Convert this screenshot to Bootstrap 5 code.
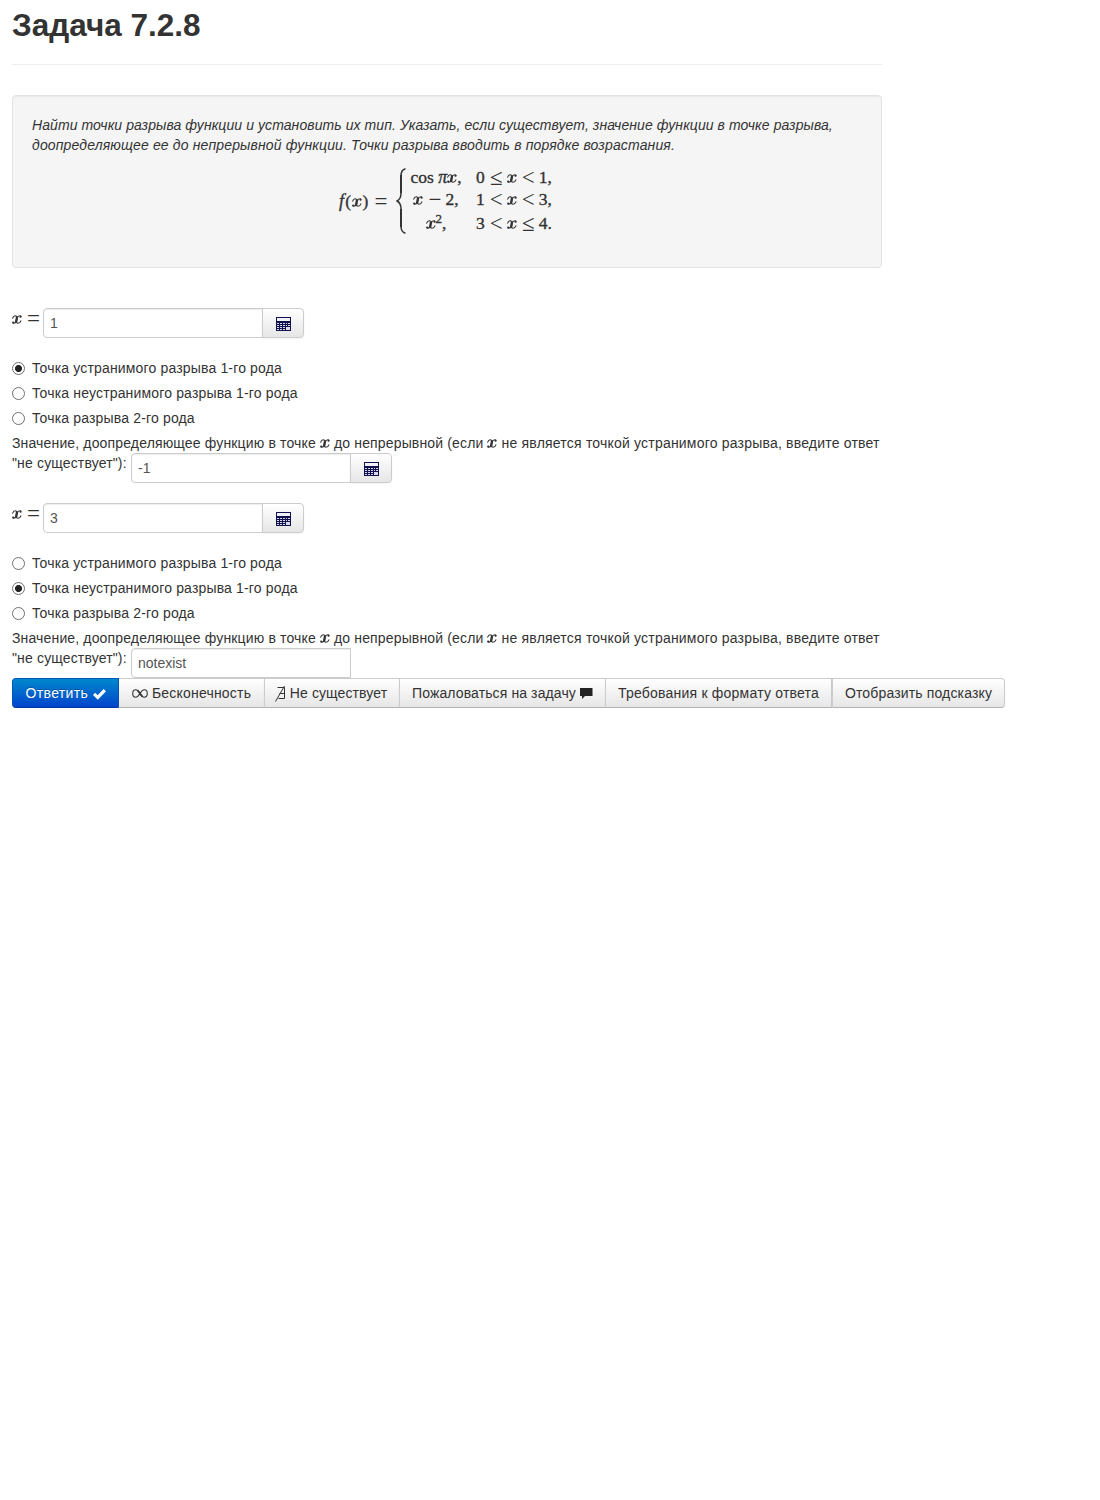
<!DOCTYPE html>
<html lang="ru">
<head>
<meta charset="utf-8">
<meta name="viewport" content="width=device-width, initial-scale=1">
<title>Задача 7.2.8</title>
<link href="https://cdn.jsdelivr.net/npm/bootstrap@5.3.0/dist/css/bootstrap.min.css" rel="stylesheet">
<style>
body{font-family:"Liberation Sans",Arial,sans-serif;font-size:14px;line-height:20px;color:#333;background:#fff}
.page{margin-left:12px;width:870px;padding-top:5px}
.title{font-size:31.5px;line-height:40px;font-weight:700;margin:0;padding-bottom:19px;border-bottom:1px solid #eee;color:#333}
.task{margin-top:30px;height:173px;padding:19px;background:#f5f5f5;border:1px solid #e3e3e3;border-radius:4px;box-shadow:inset 0 1px 1px rgba(0,0,0,.05)}
.task p{margin:0;font-style:italic;letter-spacing:.08px}
.task p span{letter-spacing:.145px}
.tex{font-family:"Liberation Serif",serif;font-size:17.5px;line-height:20px;-webkit-text-stroke:.35px #333;white-space:nowrap}
.tex i{font-size:18px}
.op{display:inline-block;width:13px;margin:0 4px 0 5px;font-size:23px;line-height:0;text-align:center;letter-spacing:0;-webkit-text-stroke:0;vertical-align:-2px}
.formula{margin-top:13px;margin-left:307px;height:66px}
.formula .lhs{width:51px;margin-right:6px;letter-spacing:1.3px}
.cases{display:grid;grid-template-columns:54px 80px;column-gap:13px;grid-template-rows:22px 24px 22px;margin-left:3px}
.cases>span:nth-child(odd){text-align:center}
.cases sup{font-size:13px;top:-.5em;line-height:0}
.var{width:31px}
.field .form-control,.field .btn{height:30px;font-size:14px;line-height:20px;border:1px solid #ccc}
.field .form-control{flex:none;width:220px;padding:4px 6px;color:#555;border-radius:4px;box-shadow:inset 0 1px 1px rgba(0,0,0,.075)}
.soft{color:#333;border:1px solid #ccc;border-bottom-color:#b3b3b3;background:linear-gradient(#fff,#e6e6e6);box-shadow:inset 0 1px 0 rgba(255,255,255,.2),0 1px 2px rgba(0,0,0,.05)}
.field .btn{width:42px;padding:2px 0 0 1px;display:flex;align-items:center;justify-content:center;border-radius:0 4px 4px 0}
.after{width:119px;letter-spacing:.15px}
.kinds{margin-top:20px}
.kinds label{height:25px;line-height:20px;letter-spacing:.16px}
.kinds input{appearance:none;width:13px;height:13px;margin:4px 7px 0 0;border:1px solid #707070;border-radius:50%;background:#fff}
.kinds input:checked{background:radial-gradient(circle,#222 0 3.1px,#fff 3.9px)}
.ask{letter-spacing:.15px}
.ask span{letter-spacing:.2px}
.ask svg{margin:-1px 0 0;vertical-align:0}
.actions .btn{height:30px;padding:0;font-size:14px;line-height:20px;border-radius:0;white-space:nowrap;flex:none;letter-spacing:.15px}
.actions{width:993px}
.actions .btn:first-child{border-radius:4px 0 0 4px;letter-spacing:.35px}
.actions .btn:last-child{border-radius:0 4px 4px 0}
.actions .send{width:107px;color:#fff;background:linear-gradient(#08c,#04c);border:1px solid #0055b8;border-bottom-color:#003a9e;text-shadow:0 -1px 0 rgba(0,0,0,.25)}
.actions svg{position:relative;top:-1px}
.actions .send svg{top:0;left:1px}
.w-inf{width:146px}.w-none{width:136px}.w-claim{width:207px}.w-format{width:227px}.w-hint{width:173px}
.actions .w-inf{letter-spacing:.2px}
.actions .w-format{letter-spacing:.22px}
.actions .w-none{letter-spacing:.1px;padding-right:2px}
.actions .w-claim{letter-spacing:.11px}
.pull{margin-left:-1px}
</style>
<script src="https://cdn.jsdelivr.net/npm/bootstrap@5.3.0/dist/js/bootstrap.bundle.min.js"></script>
</head>
<body>
<svg width="0" height="0" class="position-absolute" aria-hidden="true">
  <symbol id="calc" viewBox="0 0 16 16">
    <path fill="#11114d" d="M0 1h15v14H0z"/>
    <path fill="#f2f2fa" d="M1 2h13v3H1z"/>
    <path fill="#d8d8ea" d="M1 7h2v1H1zM4 7h2v1H4zM7 7h2v1H7zM10 7h1v1h-1zM12 7h2v1h-2zM1 9h2v1H1zM4 9h2v1H4zM7 9h2v1H7zM10 9h1v1h-1zM12 9h2v1h-2zM1 11h2v1H1zM4 11h2v1H4zM7 11h2v1H7zM1 13h2v1H1zM4 13h2v1H4zM7 13h2v1H7zM10 11h4v3h-4z"/>
  </symbol>
  <symbol id="mx" viewBox="0 0 10 9">
    <path fill="none" stroke="#333" stroke-width="1.1" stroke-linecap="round" d="M.7 3.2C1.2 1.5 2.2.8 3.2.8c1.2 0 1.900.8 1.600 2L4.100 6C3.700 7.500 2.900 8.200 1.900 8.200 1.200 8.200.8 7.900.8 7.400M9 1.700C9 1.100 8.500.8 7.900.8 6.500.8 5.400 1.800 5 3.200L4.400 6C4.100 7.400 4.800 8.200 6 8.200 7.300 8.200 8.400 7.300 8.900 5.800"/>
    <path fill="none" stroke="#333" stroke-width="2.300" d="M5.100 1.600L4.100 7.200"/>
    <circle cx="8.500" cy="1.700" r="1" fill="#333"/><circle cx="1.300" cy="7.400" r="1" fill="#333"/>
  </symbol>
</svg>
<main class="page">
  <h1 class="title">Задача 7.2.8</h1>
  <section class="task">
    <p class="text-nowrap">Найти точки разрыва функции и установить их тип. Указать, если существует, значение функции в точке разрыва,<br><span>доопределяющее ее до непрерывной функции. Точки разрыва вводить в порядке возрастания.</span></p>
    <div class="formula tex d-flex align-items-center">
      <span class="lhs"><i>f</i>(<svg width="10" height="9"><use href="#mx"/></svg>)<span class="op">=</span></span>
      <svg width="10" height="66" viewBox="0 0 10 66" fill="none" stroke="#333"><path stroke-width="1.500" d="M9.500.8C6.300 1.500 5 4 5 8v17c0 4-1 6.500-4 8 3 1.500 4 4 4 8v17c0 4 1.300 6.500 4.500 7.200"/><path stroke-width="2" d="M5 7v18M5 41v18"/></svg>
      <div class="cases">
        <span>cos <i>π</i><svg width="10" height="9"><use href="#mx"/></svg>,</span><span>0<span class="op">≤</span><svg width="10" height="9"><use href="#mx"/></svg><span class="op">&lt;</span>1,</span>
        <span><svg width="10" height="9"><use href="#mx"/></svg><span class="op">−</span>2,</span><span>1<span class="op">&lt;</span><svg width="10" height="9"><use href="#mx"/></svg><span class="op">&lt;</span>3,</span>
        <span><svg width="10" height="9"><use href="#mx"/></svg><sup>2</sup>,</span><span>3<span class="op">&lt;</span><svg width="10" height="9"><use href="#mx"/></svg><span class="op">≤</span>4.</span>
      </div>
    </div>
  </section>

  <div class="field d-flex mt-4 pt-3">
    <span class="var tex"><svg width="10" height="9"><use href="#mx"/></svg><span class="op">=</span></span>
    <input class="form-control rounded-end-0" type="text" value="1"><button class="btn soft pull" type="button" aria-label="Калькулятор"><svg width="16" height="16"><use href="#calc"/></svg></button>
  </div>
  <div class="kinds">
    <label class="d-flex"><input type="radio" name="k1" checked>Точка устранимого разрыва 1-го рода</label>
    <label class="d-flex"><input type="radio" name="k1">Точка неустранимого разрыва 1-го рода</label>
    <label class="d-flex"><input type="radio" name="k1">Точка разрыва 2-го рода</label>
  </div>
  <div class="ask text-nowrap">Значение, доопределяющее функцию в точке <svg width="10" height="9"><use href="#mx"/></svg> до непрерывной (если <svg width="10" height="9"><use href="#mx"/></svg><span> не является точкой устранимого разрыва, введите ответ</span></div>
  <div class="field d-flex mb-3 pb-1">
    <span class="after">"не существует"):</span>
    <input class="form-control rounded-end-0" type="text" value="-1"><button class="btn soft pull" type="button" aria-label="Калькулятор"><svg width="16" height="16"><use href="#calc"/></svg></button>
  </div>

  <div class="field d-flex">
    <span class="var tex"><svg width="10" height="9"><use href="#mx"/></svg><span class="op">=</span></span>
    <input class="form-control rounded-end-0" type="text" value="3"><button class="btn soft pull" type="button" aria-label="Калькулятор"><svg width="16" height="16"><use href="#calc"/></svg></button>
  </div>
  <div class="kinds">
    <label class="d-flex"><input type="radio" name="k2">Точка устранимого разрыва 1-го рода</label>
    <label class="d-flex"><input type="radio" name="k2" checked>Точка неустранимого разрыва 1-го рода</label>
    <label class="d-flex"><input type="radio" name="k2">Точка разрыва 2-го рода</label>
  </div>
  <div class="ask text-nowrap">Значение, доопределяющее функцию в точке <svg width="10" height="9"><use href="#mx"/></svg> до непрерывной (если <svg width="10" height="9"><use href="#mx"/></svg><span> не является точкой устранимого разрыва, введите ответ</span></div>
  <div class="field d-flex">
    <span class="after">"не существует"):</span>
    <input class="form-control rounded-end-0" type="text" value="notexist">
  </div>

  <div class="actions d-flex">
    <button class="btn send" type="button">Ответить <svg width="13" height="11" viewBox="0 0 13 11"><path fill="#fff" d="M0 6l2.200-2.200 2.500 2.400L10.600 0 13 2.300 4.800 10.800z"/></svg></button>
    <button class="btn soft w-inf border-start-0" type="button"><svg width="16" height="9" viewBox="0 0 16 9" fill="none" stroke="#333"><path stroke-width="1.100" d="M8 4.500C6.500 2 5.500.8 3.900.8 2 .8.700 2.400.700 4.500S2 8.200 3.700 8.200C5.600 8.200 6.800 6.500 8 4.500S10.500.8 12.300.8c1.700 0 3 1.600 3 3.700s-1.300 3.700-3.200 3.700C10.300 8.200 9.200 6.700 8 4.500z"/><path stroke-width="1.700" d="M5.500 1.300L10.500 7.700"/></svg> Бесконечность</button>
    <button class="btn soft w-none pull" type="button"><svg width="11" height="17" viewBox="0 0 11 17" class="align-middle" fill="none" stroke="#333" stroke-width="1"><path d="M2.500 2.500h7v11H3.500M4.500 8.500h5M9.500 1L.5 16.500"/></svg> Не существует</button>
    <button class="btn soft w-claim pull" type="button">Пожаловаться на задачу <svg width="13" height="11" viewBox="0 0 13 11"><path fill="#222" d="M0 0h12.500v8H5L2 11V8H0z"/></svg></button>
    <button class="btn soft w-format pull" type="button">Требования к формату ответа</button>
    <button class="btn soft w-hint" type="button">Отобразить подсказку</button>
  </div>
</main>
</body>
</html>
